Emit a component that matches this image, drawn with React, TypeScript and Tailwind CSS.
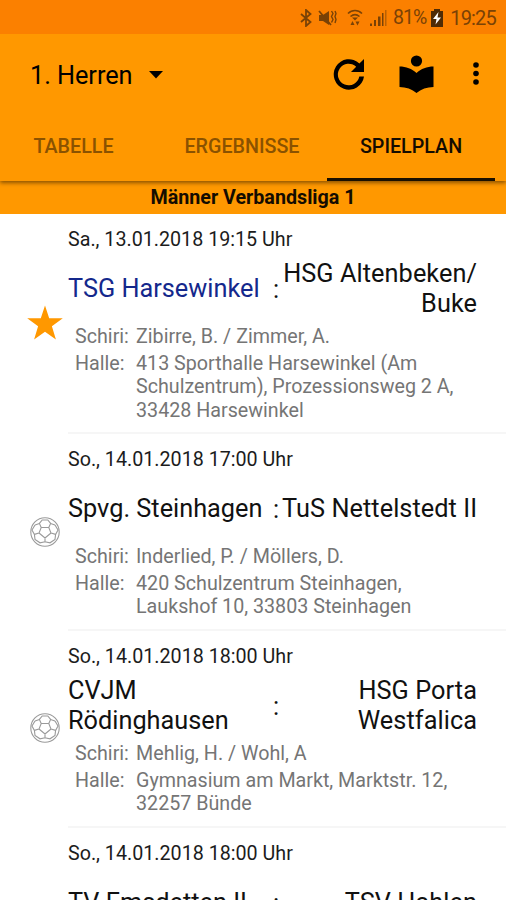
import { clsx } from 'clsx';

type Match = {
  date: string;
  home: string[];
  guest: string[];
  referee: string;
  hall: string[];
  own?: boolean;
};

const MATCHES: Match[] = [
  {
    date: 'Sa., 13.01.2018 19:15 Uhr',
    home: ['TSG Harsewinkel'],
    guest: ['HSG Altenbeken/', 'Buke'],
    referee: 'Zibirre, B. / Zimmer, A.',
    hall: ['413 Sporthalle Harsewinkel (Am', 'Schulzentrum), Prozessionsweg 2 A,', '33428 Harsewinkel'],
    own: true,
  },
  {
    date: 'So., 14.01.2018 17:00 Uhr',
    home: ['Spvg. Steinhagen'],
    guest: ['TuS Nettelstedt II'],
    referee: 'Inderlied, P. / Möllers, D.',
    hall: ['420 Schulzentrum Steinhagen,', 'Laukshof 10, 33803 Steinhagen'],
  },
  {
    date: 'So., 14.01.2018 18:00 Uhr',
    home: ['CVJM', 'Rödinghausen'],
    guest: ['HSG Porta', 'Westfalica'],
    referee: 'Mehlig, H. / Wohl, A',
    hall: ['Gymnasium am Markt, Marktstr. 12,', '32257 Bünde'],
  },
  {
    date: 'So., 14.01.2018 18:00 Uhr',
    home: ['TV Emsdetten II'],
    guest: ['TSV Hahlen'],
    referee: '',
    hall: [],
  },
];

const TABS = [
  { label: 'TABELLE', active: false },
  { label: 'ERGEBNISSE', active: false },
  { label: 'SPIELPLAN', active: true },
];

function BallIcon() {
  return (
    <svg width="30" height="30" viewBox="0 0 30 30" fill="none" stroke="#9a9a9a" strokeWidth="1.1">
      <circle cx="15" cy="15" r="14.2" />
      <path d="M11.2 10.5h7.6l2.2 5.500-6 5-6-5zM11.2 10.500L9.400 6.400 12.200 3h5.600l2.800 3.400-1.800 4.100M21 16l4.600 1.400M9 16l-4.600 1.400M15 21v4M9.400 6.400L5 8M20.600 6.400L25 8M25 8l3 5-2.400 4.400-.6 5-5 3.400-5-1-5 1-5-3.400-.6-5L2 13l3-5" />
    </svg>
  );
}

function StarIcon() {
  return (
    <svg width="36" height="36" viewBox="0 0 36 36" fill="#ff9800">
      <path d="M18 .5l4.200 12.700 13.600.1-10.900 7.900 4 13.300L18 26.800l-10.900 7.700 4-13.300L.2 13.300l13.600-.1z" />
    </svg>
  );
}

function StatusBar() {
  return (
    <div className="flex h-[34px] items-center justify-end bg-[#fb8000] pr-2.5 pt-0.5 text-[#7a4206]">
      <svg width="12" height="18" viewBox="0 0 12 18" fill="none" stroke="currentColor" strokeWidth="1.8">
        <path d="M1 5l9.500 8L6 17V1l4.500 4L1 13" />
      </svg>
      <svg className="ml-1.5" width="19" height="18" viewBox="0 0 19 18" fill="none" stroke="currentColor" strokeWidth="1.8">
        <path d="M1 6h4l6-4v14l-6-4H1z" fill="currentColor" stroke="none" />
        <path d="M1 2l12 14" />
        <path d="M13.500 2l1.500 2.500-1.500 3 1.500 3-1.500 3M17 2l1 2.500-1 3 1 3-1 3.500" strokeWidth="1.400" />
      </svg>
      <svg className="ml-2.5" width="16" height="18" viewBox="0 0 16 18" fill="none" stroke="currentColor" strokeWidth="1.6">
        <path d="M1 4.500c4-4 10-4 14 0M3.500 7.500c3-2.500 6-2.500 9 0" />
        <path d="M5 8.500h6l-3 3zM5.500 12l2 4h-4zM8.500 12.500h4l-2 4z" fill="currentColor" stroke="none" />
      </svg>
      <svg className="ml-[7px]" width="17" height="18" viewBox="0 0 17 18" fill="currentColor">
        <path d="M0 14.500h2V17H0zM4 11h2v6H4zM8 7.500h2.500V17H8zM12 4h1.500v13H12z" />
        <path d="M15 1h1.500v16H15z" opacity=".5" />
      </svg>
      <span className="ml-1.5 text-[19.500px] tracking-[-1px]">81%</span>
      <svg className="ml-[5px]" width="12" height="18" viewBox="0 0 12 18">
        <path d="M3 0h6v2h3v16H0V2h3z" fill="#4f2b05" />
        <path d="M7.500 3L2 10h3.500l-1 5.500 5.500-7H6.500z" fill="#fff" />
      </svg>
      <span className="ml-[7px] text-[20px] tracking-[-0.8px]">19:25</span>
    </div>
  );
}

function Toolbar() {
  return (
    <div className="flex h-20 items-center pl-[30px] pr-[27px] text-black">
      <button className="flex items-center gap-[17px] pt-[3px] text-[25.300px] leading-none tracking-[-0.05px]">
        1. Herren
        <svg width="14" height="8" viewBox="0 0 14 8">
          <path d="M0 0h14L7 7.500z" />
        </svg>
      </button>
      <div className="ml-auto flex items-center">
        <svg width="32" height="32" viewBox="0 0 32 32">
          <path d="M31 1v13H18l5.200-5.200A10.800 10.800 0 1 0 26.300 18.500H31A15.200 15.200 0 1 1 26.400 5.400z" />
        </svg>
        <svg className="ml-[34px]" width="35" height="38" viewBox="0 0 35 38">
          <circle cx="17.500" cy="6" r="5.600" />
          <path d="M17.500 18C13 13.800 7 11.500.500 11.500V32c6.500 0 12.500 2 17 6 4.500-4 10.500-6 17-6V11.500c-6.500 0-12.500 2.300-17 6.500z" />
        </svg>
        <svg className="ml-[39px]" width="6" height="24" viewBox="0 0 6 24">
          <circle cx="3" cy="3" r="2.800" />
          <circle cx="3" cy="11.500" r="2.800" />
          <circle cx="3" cy="20" r="2.800" />
        </svg>
      </div>
    </div>
  );
}

function MatchRow({ match }: { match: Match }) {
  return (
    <li className="flex min-h-[196.800px]">
      <div className="flex w-[68px] shrink-0 items-center justify-center pb-0.5 pl-[21px]">
        <div className={match.own ? 'w-9' : 'w-[30px]'}>{match.own ? <StarIcon /> : <BallIcon />}</div>
      </div>
      <div className="flex-1 border-b-2 border-[#f6f6f6] pb-[10.300px] pt-3.5">
        <p className="text-[19.700px] leading-6 text-[#1c1c1c]">{match.date}</p>
        <div className="mt-[7px] flex h-[60px] items-center text-[25.300px] leading-[29.700px] text-[#111]">
          <div className={clsx('w-[202px] shrink-0', match.own && 'text-[#14288c]')}>
            {match.home.map(line => <div key={line} className="whitespace-nowrap">{line}</div>)}
          </div>
          <span className="w-3 pt-px text-center">:</span>
          <div className="flex flex-1 flex-col items-end pr-[29px] tracking-[0.06px]">
            {match.guest.map(line => <div key={line} className="whitespace-nowrap">{line}</div>)}
          </div>
        </div>
        <dl className="mt-1.5 grid grid-cols-[61px_1fr] gap-y-[3px] pl-[7px] text-[19.700px] leading-[23.500px] text-[#757575]">
          <dt>Schiri:</dt>
          <dd>{match.referee}</dd>
          <dt>Halle:</dt>
          <dd>{match.hall.map(line => <div key={line} className="whitespace-nowrap">{line}</div>)}</dd>
        </dl>
      </div>
    </li>
  );
}

export default function App() {
  return (
    <div className="flex h-[900px] w-[506px] flex-col overflow-hidden bg-white font-[Roboto,sans-serif]">
      <header className="relative z-10 shrink-0 bg-[#ff9800] shadow-[0_2px_4px_rgba(0,0,0,0.45)]">
        <StatusBar />
        <Toolbar />
        <nav className="flex h-[67px] pr-[11px]">
          {TABS.map(tab => (
            <button
              key={tab.label}
              className={clsx(
                'flex items-center justify-center border-b-[3px] pt-0.5 text-[19.700px] font-medium',
                tab.label === 'TABELLE' && 'w-[147px]',
                tab.label === 'ERGEBNISSE' && 'w-[180px] pl-2.5',
                tab.active ? 'w-[168px] border-[#1a1000] text-[#140c00]' : 'border-transparent text-[#8a5200]'
              )}
            >
              {tab.label}
            </button>
          ))}
        </nav>
      </header>
      <h2 className="flex h-[33px] shrink-0 items-center justify-center bg-[#ff9800] pt-px text-[19.700px] font-bold text-[#140c00]">
        Männer Verbandsliga 1
      </h2>
      <ul className="shrink-0">
        {MATCHES.map((match, i) => <MatchRow key={i} match={match} />)}
      </ul>
    </div>
  );
}
